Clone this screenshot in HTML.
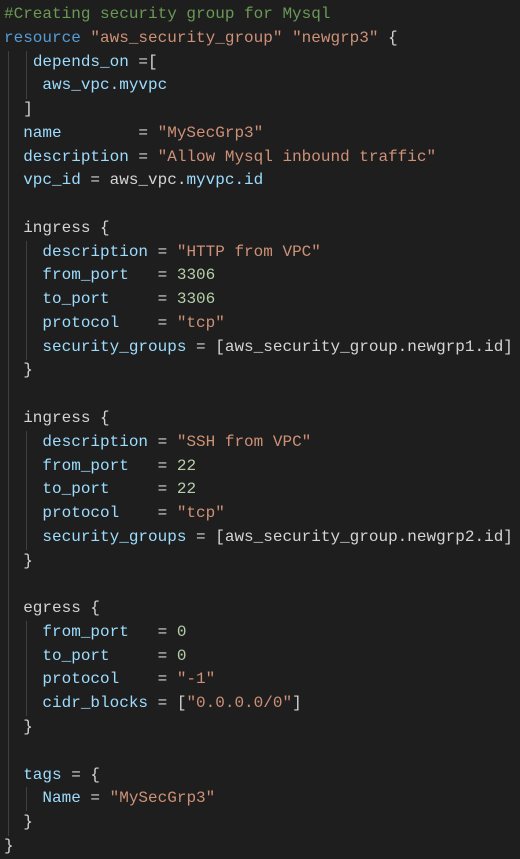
<!DOCTYPE html>
<html><head><meta charset="utf-8"><style>
html,body{margin:0;padding:0;background:#1e1e1e;width:520px;height:858px;overflow:hidden;}
pre{margin:0;position:absolute;left:4px;top:3px;font-family:"Liberation Mono",monospace;font-size:16px;line-height:23.77px;color:#d4d4d4;}
.c{color:#6a9955}.k{color:#569cd6}.s{color:#ce9178}.a{color:#9cdcfe}.n{color:#b5cea8}
.g{position:absolute;width:1px;background:#404040;}
</style></head><body>
<div class="g" style="left:8px;top:51px;height:785px"></div>
<div class="g" style="left:26px;top:51px;height:48px"></div>
<div class="g" style="left:26px;top:241px;height:119px"></div>
<div class="g" style="left:26px;top:431px;height:119px"></div>
<div class="g" style="left:26px;top:621px;height:95px"></div>
<div class="g" style="left:26px;top:787px;height:24px"></div>
<pre><span class="c">#Creating security group for Mysql</span>
<span class="k">resource</span> <span class="s">"aws_security_group"</span> <span class="s">"newgrp3"</span> {
   <span class="a">depends_on</span> =[
    <span class="a">aws_vpc.myvpc</span>
  ]
  <span class="a">name</span>        = <span class="s">"MySecGrp3"</span>
  <span class="a">description</span> = <span class="s">"Allow Mysql inbound traffic"</span>
  <span class="a">vpc_id</span> = aws_vpc.<span class="a">myvpc.id</span>

  ingress {
    <span class="a">description</span> = <span class="s">"HTTP from VPC"</span>
    <span class="a">from_port</span>   = <span class="n">3306</span>
    <span class="a">to_port</span>     = <span class="n">3306</span>
    <span class="a">protocol</span>    = <span class="s">"tcp"</span>
    <span class="a">security_groups</span> = [aws_security_group.newgrp1.id]
  }

  ingress {
    <span class="a">description</span> = <span class="s">"SSH from VPC"</span>
    <span class="a">from_port</span>   = <span class="n">22</span>
    <span class="a">to_port</span>     = <span class="n">22</span>
    <span class="a">protocol</span>    = <span class="s">"tcp"</span>
    <span class="a">security_groups</span> = [aws_security_group.newgrp2.id]
  }

  egress {
    <span class="a">from_port</span>   = <span class="n">0</span>
    <span class="a">to_port</span>     = <span class="n">0</span>
    <span class="a">protocol</span>    = <span class="s">"-1"</span>
    <span class="a">cidr_blocks</span> = [<span class="s">"0.0.0.0/0"</span>]
  }

  <span class="a">tags</span> = {
    <span class="a">Name</span> = <span class="s">"MySecGrp3"</span>
  }
}</pre>
</body></html>
